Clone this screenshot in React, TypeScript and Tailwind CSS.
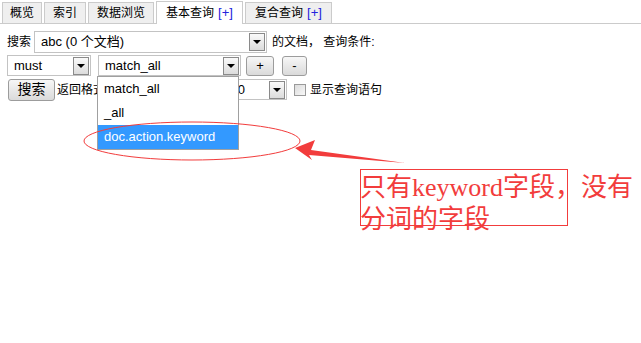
import React from 'react';

const FONT = "font-['Liberation_Sans','Noto_Sans_CJK_SC',sans-serif]";

const TABS = [
  { label: '概览', w: 'w-[40px]' },
  { label: '索引', w: 'w-[42px]' },
  { label: '数据浏览', w: 'w-[66px]' },
  { label: '基本查询', w: 'w-[87px]', plus: true, active: true },
  { label: '复合查询', w: 'w-[87px]', plus: true },
];

function Arrow() {
  return (
    <span className="flex h-[18px] w-[16px] items-center justify-center border border-[#8a8a8a] bg-linear-to-b from-[#fafafa] to-[#dcdcdc]">
      <span className="h-0 w-0 border-x-[4px] border-t-[4px] border-x-transparent border-t-black" />
    </span>
  );
}

function Select({ value, className }: { value: string; className: string }) {
  return (
    <div className={`flex h-[21px] items-center border border-[#c3c3c3] bg-white pl-[6px] pr-[1px] ${className}`}>
      <span className="flex-1 truncate text-[13px] text-black">{value}</span>
      <Arrow />
    </div>
  );
}

function Btn({ children, className }: { children: React.ReactNode; className: string }) {
  return (
    <button className={`flex items-center justify-center rounded-[3px] border border-[#9c9c9c] bg-linear-to-b from-[#f7f7f7] to-[#dadada] text-black ${className}`}>
      {children}
    </button>
  );
}

export default function App() {
  return (
    <div className={`relative h-[343px] w-[641px] overflow-hidden bg-white text-black ${FONT}`}>
      {/* tabs */}
      <div className="flex h-[24px] items-end gap-[2px] border-b border-[#cbcbcb] pl-[2px]">
        {TABS.map((t) => (
          <div
            key={t.label}
            className={`flex items-center justify-center border border-b-0 border-[#cbcbcb] text-[12px] ${t.w} ${
              t.active ? 'mb-[-1px] h-[23px] bg-white' : 'h-[21px] bg-[#efefef]'
            }`}
          >
            {t.label}
            {t.plus && <span className="ml-[4px] text-[13px] text-[#2222dd]">[+]</span>}
          </div>
        ))}
      </div>

      <div className="flex flex-col pl-[7px] pt-[7px] text-[12px]">
        <div className="flex h-[22px] items-center">
          <span>搜索</span>
          <Select value="abc (0 个文档)" className="ml-[3px] h-[22px] w-[233px]" />
          <span className="ml-[5px]">的文档， 查询条件:</span>
        </div>

        <div className="mt-[2px] flex h-[21px] items-center">
          <Select value="must" className="w-[84px]" />
          <Select value="match_all" className="ml-[7px] w-[143px]" />
          <Btn className="ml-[5px] h-[20px] w-[28px] text-[13px]">+</Btn>
          <Btn className="ml-[8px] h-[20px] w-[25px] text-[13px]">-</Btn>
        </div>

        <div className="mt-[2px] flex h-[23px] items-center">
          <Btn className="ml-[1px] h-[22px] w-[47px] text-[14px]">搜索</Btn>
          <span className="ml-[2px]">返回格式：</span>
          <div className="ml-[2px] flex h-[21px] w-[168px] items-center border border-[#c3c3c3] bg-white pr-[1px]">
            <span className="ml-auto mr-[24px] text-[13px]">10</span>
            <Arrow />
          </div>
          <span className="ml-[7px] h-[12px] w-[12px] border border-[#9a9a9a] bg-linear-to-br from-[#dcdcdc] to-[#f8f8f8]" />
          <span className="ml-[4px]">显示查询语句</span>
        </div>
      </div>

      {/* open dropdown */}
      <div className="absolute left-[97px] top-[76px] flex w-[142px] flex-col border border-[#a0a0a0] bg-white text-[13px]">
        <div className="flex h-[24px] items-center pl-[6px]">match_all</div>
        <div className="flex h-[24px] items-center pl-[6px]">_all</div>
        <div className="flex h-[24px] items-center bg-[#3399ff] pl-[6px] text-white">doc.action.keyword</div>
      </div>

      {/* annotation */}
      <svg className="pointer-events-none absolute left-0 top-0" width="641" height="343">
        <ellipse cx="192" cy="141" rx="108" ry="19" fill="none" stroke="#f23c3c" strokeWidth="1" />
        <polygon points="295,148 315,140 311,150 405,163 309,155 312,160" fill="#f23c3c" />
      </svg>

      <div className="absolute left-[360px] top-[169px] h-[57px] w-[208px] border border-[#f23c3c]" />
      <div className="absolute left-[360px] top-[172px] whitespace-nowrap font-['Liberation_Serif','Noto_Sans_CJK_SC',serif] text-[26px] leading-[32px] text-[#f23c3c]">
        只有keyword字段，没有
        <br />
        分词的字段
      </div>
    </div>
  );
}
